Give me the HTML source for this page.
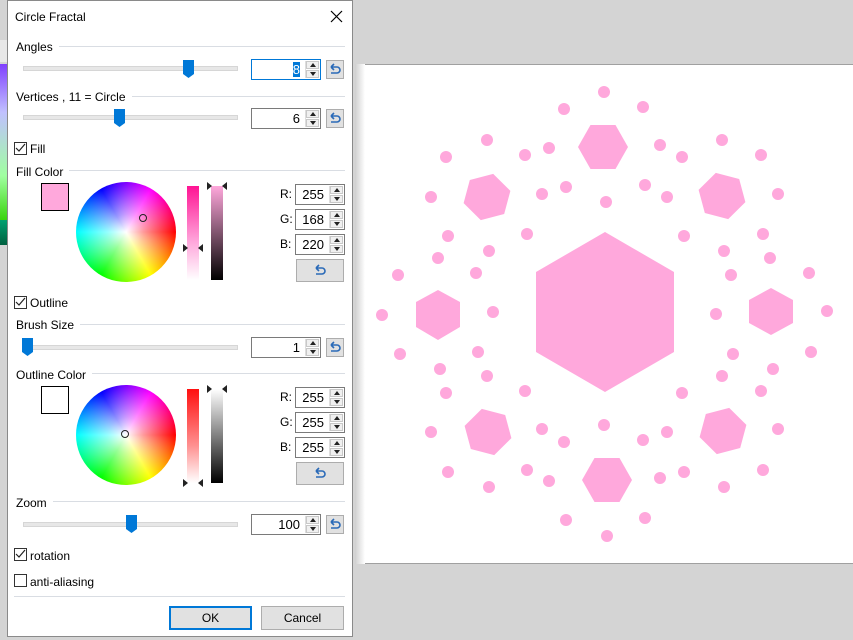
<!DOCTYPE html>
<html><head><meta charset="utf-8"><style>
*{margin:0;padding:0;box-sizing:border-box}
body{width:853px;height:640px;background:#d4d4d4;position:relative;overflow:hidden;font-family:"Liberation Sans",sans-serif;font-size:12px;color:#000}
.a{position:absolute}
.dlg{left:7px;top:0;width:346px;height:637px;background:#fff;border:1px solid #8a8a8a}
.lbl{position:absolute;background:#fff;padding-right:6px;white-space:nowrap}
.line{position:absolute;height:1px;background:#d9dde3}
.track{position:absolute;height:5px;background:#e7e7e7;border:1px solid #d6d6d6}
.thumb{position:absolute;width:11px;height:18px}
.inp{position:absolute;height:21px;border:1px solid #7a7a7a;background:#fff;text-align:right;padding-right:20px;line-height:19px;font-size:13px}
.spin{position:absolute;right:1px;top:1px;width:14px;height:17px;border-left:1px solid #ddd}
.spin i{display:block;height:8px;background:#f0f0f0;border:1px solid #c8c8c8;position:relative}
.spin i:first-child{margin-bottom:1px}
.spin i:after{content:"";position:absolute;left:3px;top:1px;border-left:3px solid transparent;border-right:3px solid transparent}
.spin i.u:after{border-bottom:4px solid #222}
.spin i.d:after{border-top:4px solid #222}
.rb{position:absolute;width:18px;height:19px;background:#e1e1e1;border:1px solid #adadad}
.cb{position:absolute;width:13px;height:13px;border:1px solid #333;background:#fff}
.wheel{position:absolute;width:100px;height:100px;border-radius:50%;background:radial-gradient(circle,#fff 0,rgba(255,255,255,.6) 25%,rgba(255,255,255,0) 70%),conic-gradient(#8000ff,#f0f 30deg,#f00 90deg,#ff0 150deg,#0f0 210deg,#0ff 270deg,#00f 330deg,#8000ff)}
.mk{position:absolute;width:8px;height:8px;border:1px solid #222;border-radius:50%}
.btn{position:absolute;height:24px;background:#e1e1e1;border:1px solid #adadad;text-align:center;line-height:22px}
.tri{position:absolute;width:0;height:0;border-top:4px solid transparent;border-bottom:4px solid transparent}
</style></head><body>
<div class="a" style="left:0;top:40px;width:8px;height:22px;background:#e8e8e8"></div>
<div class="a" style="left:0;top:64px;width:8px;height:160px;background:linear-gradient(#8040ff,#c0c0ff 30%,#a0ffa0 70%,#30d000)"></div>
<div class="a" style="left:0;top:220px;width:8px;height:25px;background:linear-gradient(#00a070,#006040)"></div>

<!-- canvas -->
<div class="a" style="left:355px;top:64px;width:498px;height:500px;background:#fff;border-top:1px solid #a0a0a0;border-bottom:1px solid #a0a0a0"></div>
<div class="a" style="left:355px;top:64px;width:10px;height:500px;background:linear-gradient(90deg,#d0d0d0,#fff)"></div>
<svg class="a" style="left:0;top:0" width="853" height="640"><g fill="#ffa8dc">
<polygon points="605,232 674,272 674,352 605,392 536,352 536,272"/>
<polygon points="628,147 615.5,169 590.5,169 578,147 590.5,125 615.5,125"/>
<polygon points="632,480 619.5,502 594.5,502 582,480 594.5,458 619.5,458"/>
<polygon points="438,290 460,302 460,327 438,340 416,327 416,302"/>
<polygon points="771,288 793,300 793,323 771,335 749,323 749,300"/>
<g transform="translate(487,197) rotate(15)"><polygon points="0,-24 21,-12 21,12 0,24 -21,12 -21,-12"/></g>
<g transform="translate(722,196) rotate(-15)"><polygon points="0,-24 21,-12 21,12 0,24 -21,12 -21,-12"/></g>
<g transform="translate(488,432) rotate(-15)"><polygon points="0,-24 21,-12 21,12 0,24 -21,12 -21,-12"/></g>
<g transform="translate(723,431) rotate(15)"><polygon points="0,-24 21,-12 21,12 0,24 -21,12 -21,-12"/></g>
<circle cx="604" cy="92" r="6"/><circle cx="564" cy="109" r="6"/><circle cx="643" cy="107" r="6"/><circle cx="487" cy="140" r="6"/><circle cx="446" cy="157" r="6"/><circle cx="525" cy="155" r="6"/><circle cx="549" cy="148" r="6"/><circle cx="660" cy="145" r="6"/><circle cx="682" cy="157" r="6"/><circle cx="722" cy="140" r="6"/><circle cx="761" cy="155" r="6"/><circle cx="431" cy="197" r="6"/><circle cx="542" cy="194" r="6"/><circle cx="566" cy="187" r="6"/><circle cx="606" cy="202" r="6"/><circle cx="645" cy="185" r="6"/><circle cx="667" cy="197" r="6"/><circle cx="778" cy="194" r="6"/><circle cx="448" cy="236" r="6"/><circle cx="527" cy="234" r="6"/><circle cx="684" cy="236" r="6"/><circle cx="763" cy="234" r="6"/><circle cx="438" cy="258" r="6"/><circle cx="489" cy="251" r="6"/><circle cx="724" cy="251" r="6"/><circle cx="770" cy="258" r="6"/><circle cx="398" cy="275" r="6"/><circle cx="476" cy="273" r="6"/><circle cx="731" cy="275" r="6"/><circle cx="809" cy="273" r="6"/><circle cx="382" cy="315" r="6"/><circle cx="493" cy="312" r="6"/><circle cx="716" cy="314" r="6"/><circle cx="827" cy="311" r="6"/><circle cx="400" cy="354" r="6"/><circle cx="478" cy="352" r="6"/><circle cx="733" cy="354" r="6"/><circle cx="811" cy="352" r="6"/><circle cx="440" cy="369" r="6"/><circle cx="487" cy="376" r="6"/><circle cx="722" cy="376" r="6"/><circle cx="773" cy="369" r="6"/><circle cx="446" cy="393" r="6"/><circle cx="525" cy="391" r="6"/><circle cx="682" cy="393" r="6"/><circle cx="761" cy="391" r="6"/><circle cx="431" cy="432" r="6"/><circle cx="542" cy="429" r="6"/><circle cx="604" cy="425" r="6"/><circle cx="564" cy="442" r="6"/><circle cx="643" cy="440" r="6"/><circle cx="667" cy="432" r="6"/><circle cx="778" cy="429" r="6"/><circle cx="448" cy="472" r="6"/><circle cx="527" cy="470" r="6"/><circle cx="549" cy="481" r="6"/><circle cx="660" cy="478" r="6"/><circle cx="684" cy="472" r="6"/><circle cx="763" cy="470" r="6"/><circle cx="489" cy="487" r="6"/><circle cx="724" cy="487" r="6"/><circle cx="566" cy="520" r="6"/><circle cx="645" cy="518" r="6"/><circle cx="607" cy="536" r="6"/>
</g></svg>

<div class="a dlg"></div>
<div class="a" style="left:15px;top:10px;font-size:12px">Circle Fractal</div>
<svg class="a" style="left:330px;top:10px" width="13" height="13"><path d="M1,1L12,12M12,1L1,12" stroke="#000" stroke-width="1.2"/></svg>

<!-- Angles -->
<div class="line" style="left:16px;top:46px;width:329px"></div><div class="lbl" style="left:16px;top:40px">Angles</div>
<div class="track" style="left:23px;top:66px;width:215px"></div>
<svg class="thumb" style="left:183px;top:60px"><path d="M0,0H11V14L5.5,18L0,14Z" fill="#0078d7"/></svg>
<div class="inp" style="left:251px;top:59px;width:70px;border-color:#0078d7"><span style="background:#0078d7;color:#fff">8</span><div class="spin"><i class="u"></i><i class="d"></i></div></div>
<div class="rb" style="left:326px;top:60px"><svg width="16" height="17"><path d="M4,6H10A3,3 0 0 1 10,12H4M4,6L7,3M4,6L7,9" fill="none" stroke="#2a6ab8" stroke-width="1.6"/></svg></div>

<!-- Vertices -->
<div class="line" style="left:16px;top:96px;width:329px"></div><div class="lbl" style="left:16px;top:90px">Vertices , 11 = Circle</div>
<div class="track" style="left:23px;top:115px;width:215px"></div>
<svg class="thumb" style="left:114px;top:109px"><path d="M0,0H11V14L5.5,18L0,14Z" fill="#0078d7"/></svg>
<div class="inp" style="left:251px;top:108px;width:70px">6<div class="spin"><i class="u"></i><i class="d"></i></div></div>
<div class="rb" style="left:326px;top:109px"><svg width="16" height="17"><path d="M4,6H10A3,3 0 0 1 10,12H4M4,6L7,3M4,6L7,9" fill="none" stroke="#2a6ab8" stroke-width="1.6"/></svg></div>

<div class="cb" style="left:14px;top:142px"><svg width="11" height="11"><path d="M1,5L4,8L10,1" fill="none" stroke="#222" stroke-width="1.2"/></svg></div>
<div class="a" style="left:30px;top:142px">Fill</div>

<!-- Fill color -->
<div class="line" style="left:16px;top:170px;width:329px"></div><div class="lbl" style="left:16px;top:165px">Fill Color</div>
<div class="a" style="left:41px;top:183px;width:28px;height:28px;border:1px solid #000;background:#ffa8dc"></div>
<div class="wheel" style="left:76px;top:182px"></div>
<div class="mk" style="left:139px;top:214px"></div>
<div class="a" style="left:187px;top:186px;width:12px;height:94px;background:linear-gradient(#ff1493,#ffa8dc 60%,#fff)"></div>
<div class="a" style="left:211px;top:186px;width:12px;height:94px;background:linear-gradient(#ffa8dc,#000)"></div>
<div class="tri" style="left:207px;top:182px;border-left:5px solid #222"></div><div class="tri" style="left:222px;top:182px;border-right:5px solid #222"></div>
<div class="tri" style="left:183px;top:244px;border-left:5px solid #222"></div><div class="tri" style="left:198px;top:244px;border-right:5px solid #222"></div>
<div class="a" style="left:280px;top:187px">R:</div><div class="inp" style="left:295px;top:184px;width:50px">255<div class="spin"><i class="u"></i><i class="d"></i></div></div>
<div class="a" style="left:280px;top:212px">G:</div><div class="inp" style="left:295px;top:209px;width:50px">168<div class="spin"><i class="u"></i><i class="d"></i></div></div>
<div class="a" style="left:280px;top:237px">B:</div><div class="inp" style="left:295px;top:234px;width:50px">220<div class="spin"><i class="u"></i><i class="d"></i></div></div>
<div class="rb" style="left:296px;top:259px;width:48px;height:23px;text-align:center"><svg width="16" height="17" style="margin-top:2px"><path d="M4,6H10A3,3 0 0 1 10,12H4M4,6L7,3M4,6L7,9" fill="none" stroke="#2a6ab8" stroke-width="1.6"/></svg></div>

<div class="cb" style="left:14px;top:296px"><svg width="11" height="11"><path d="M1,5L4,8L10,1" fill="none" stroke="#222" stroke-width="1.2"/></svg></div>
<div class="a" style="left:30px;top:296px">Outline</div>

<!-- Brush -->
<div class="line" style="left:16px;top:324px;width:329px"></div><div class="lbl" style="left:16px;top:318px">Brush Size</div>
<div class="track" style="left:23px;top:345px;width:215px"></div>
<svg class="thumb" style="left:22px;top:338px"><path d="M0,0H11V14L5.5,18L0,14Z" fill="#0078d7"/></svg>
<div class="inp" style="left:251px;top:337px;width:70px">1<div class="spin"><i class="u"></i><i class="d"></i></div></div>
<div class="rb" style="left:326px;top:338px"><svg width="16" height="17"><path d="M4,6H10A3,3 0 0 1 10,12H4M4,6L7,3M4,6L7,9" fill="none" stroke="#2a6ab8" stroke-width="1.6"/></svg></div>

<!-- Outline color -->
<div class="line" style="left:16px;top:373px;width:329px"></div><div class="lbl" style="left:16px;top:368px">Outline Color</div>
<div class="a" style="left:41px;top:386px;width:28px;height:28px;border:1px solid #000;background:#fff"></div>
<div class="wheel" style="left:76px;top:385px"></div>
<div class="mk" style="left:121px;top:430px"></div>
<div class="a" style="left:187px;top:389px;width:12px;height:94px;background:linear-gradient(#ff1010,#ff9090 60%,#fff)"></div>
<div class="a" style="left:211px;top:389px;width:12px;height:94px;background:linear-gradient(#fff,#000)"></div>
<div class="tri" style="left:207px;top:385px;border-left:5px solid #222"></div><div class="tri" style="left:222px;top:385px;border-right:5px solid #222"></div>
<div class="tri" style="left:183px;top:479px;border-left:5px solid #222"></div><div class="tri" style="left:198px;top:479px;border-right:5px solid #222"></div>
<div class="a" style="left:280px;top:390px">R:</div><div class="inp" style="left:295px;top:387px;width:50px">255<div class="spin"><i class="u"></i><i class="d"></i></div></div>
<div class="a" style="left:280px;top:415px">G:</div><div class="inp" style="left:295px;top:412px;width:50px">255<div class="spin"><i class="u"></i><i class="d"></i></div></div>
<div class="a" style="left:280px;top:440px">B:</div><div class="inp" style="left:295px;top:437px;width:50px">255<div class="spin"><i class="u"></i><i class="d"></i></div></div>
<div class="rb" style="left:296px;top:462px;width:48px;height:23px;text-align:center"><svg width="16" height="17" style="margin-top:2px"><path d="M4,6H10A3,3 0 0 1 10,12H4M4,6L7,3M4,6L7,9" fill="none" stroke="#2a6ab8" stroke-width="1.6"/></svg></div>

<!-- Zoom -->
<div class="line" style="left:16px;top:501px;width:329px"></div><div class="lbl" style="left:16px;top:496px">Zoom</div>
<div class="track" style="left:23px;top:522px;width:215px"></div>
<svg class="thumb" style="left:126px;top:515px"><path d="M0,0H11V14L5.5,18L0,14Z" fill="#0078d7"/></svg>
<div class="inp" style="left:251px;top:514px;width:70px">100<div class="spin"><i class="u"></i><i class="d"></i></div></div>
<div class="rb" style="left:326px;top:515px"><svg width="16" height="17"><path d="M4,6H10A3,3 0 0 1 10,12H4M4,6L7,3M4,6L7,9" fill="none" stroke="#2a6ab8" stroke-width="1.6"/></svg></div>

<div class="cb" style="left:14px;top:548px"><svg width="11" height="11"><path d="M1,5L4,8L10,1" fill="none" stroke="#222" stroke-width="1.2"/></svg></div>
<div class="a" style="left:30px;top:549px">rotation</div>
<div class="cb" style="left:14px;top:574px"></div>
<div class="a" style="left:30px;top:575px">anti-aliasing</div>
<div class="line" style="left:14px;top:596px;width:331px"></div>
<div class="btn" style="left:169px;top:606px;width:83px;border:2px solid #0078d7;line-height:20px">OK</div>
<div class="btn" style="left:261px;top:606px;width:83px">Cancel</div>
</body></html>
